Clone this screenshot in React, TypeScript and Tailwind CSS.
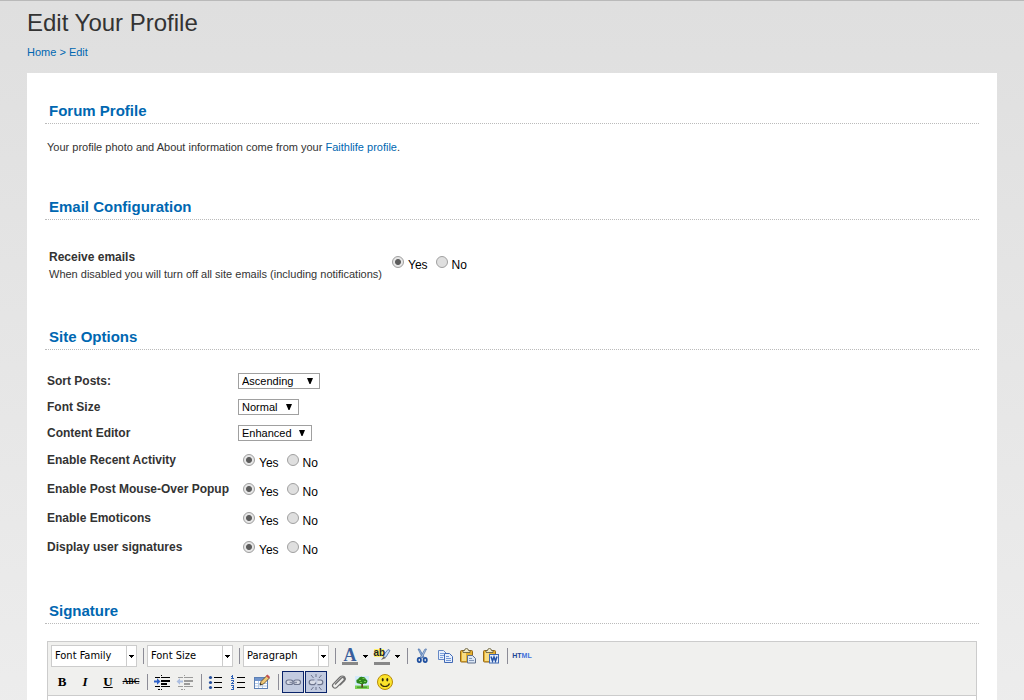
import type { ReactNode } from "react";

function SectionHeading({ children, className = "" }: { children: ReactNode; className?: string }) {
  return (
    <h2
      className={`border-b border-dotted border-[#bbbbbb] pb-0.5 pl-1 text-[15px] leading-5 font-bold text-[#0067b1] ${className}`}
    >
      {children}
    </h2>
  );
}

function Radio({ name, label, checked = false }: { name: string; label: string; checked?: boolean }) {
  return (
    <label className="flex items-center gap-1 text-xs text-black">
      <input
        type="radio"
        name={name}
        defaultChecked={checked}
        className="mb-1.5 size-3 appearance-none rounded-full border border-[#a0a0a0] bg-[#dfdfdf] checked:bg-[radial-gradient(circle,#5c5c5c_0,#5c5c5c_2.5px,#e6e6e6_3.5px)]"
      />
      {label}
    </label>
  );
}

function YesNo({ name }: { name: string }) {
  return (
    <div className="flex gap-2">
      <Radio name={name} label="Yes" checked />
      <Radio name={name} label="No" />
    </div>
  );
}

function SelectRow({ id, label, value, width }: { id: string; label: string; value: string; width: string }) {
  return (
    <div className="flex h-[26px] items-center">
      <label htmlFor={id} className="w-[191px] text-xs font-bold">
        {label}
      </label>
      <div className={`relative ${width}`}>
        <select
          id={id}
          className="block h-4 w-full appearance-none border border-[#a0a0a0] bg-white pl-[3px] text-[11px] leading-3 text-black"
        >
          <option>{value}</option>
        </select>
        <svg className="pointer-events-none absolute top-1 right-1.5 h-2 w-2" viewBox="0 0 8 8">
          <path d="M1 1h6L4.500 7h-1z" fill="#000" />
        </svg>
      </div>
    </div>
  );
}

function RadioRow({ name, label }: { name: string; label: string }) {
  return (
    <div className="flex h-[29px] items-center" role="radiogroup" aria-label={label}>
      <span className="w-[196px] pb-0.5 text-xs font-bold">{label}</span>
      <div className="pt-1">
        <YesNo name={name} />
      </div>
    </div>
  );
}

function Separator() {
  return <span className="mr-0.5 ml-1 h-4 w-px shrink-0 bg-[#8c8c96]" />;
}

function ToolSelect({ label }: { label: string }) {
  return (
    <div className="relative mr-px w-[86px] shrink-0">
      <select
        aria-label={label}
        className="block h-[22px] w-full appearance-none border border-[#cccccc] bg-white pl-[3px] font-['DejaVu_Sans_Condensed','DejaVu_Sans',sans-serif] text-[11px] text-black"
      >
        <option>{label}</option>
      </select>
      <span className="pointer-events-none absolute top-0 right-0 flex h-[22px] w-[11px] items-center justify-center border border-[#cccccc]">
        <svg className="h-[3px] w-[5px]" viewBox="0 0 5 3" shapeRendering="crispEdges">
          <path d="M0 0h5v1H0zM1 1h3v1H1zM2 2h1v1H2z" fill="#000" />
        </svg>
      </span>
    </div>
  );
}

function Tool({ label, active = false, children }: { label: string; active?: boolean; children: ReactNode }) {
  return (
    <button
      type="button"
      aria-label={label}
      className={`flex size-[22px] shrink-0 items-center justify-center border font-['Liberation_Serif',serif] text-black ${
        active ? "border-[#0a246a] bg-[#c2cbe0]" : "border-transparent"
      }`}
    >
      {children}
    </button>
  );
}

function SplitTool({ label, children }: { label: string; children: ReactNode }) {
  return (
    <button type="button" aria-label={label} className="flex h-[22px] w-[31px] shrink-0 items-center pl-px">
      {children}
      <svg className="ml-[3px] h-[3px] w-[5px]" viewBox="0 0 5 3" shapeRendering="crispEdges">
        <path d="M0 0h5v1H0zM1 1h3v1H1zM2 2h1v1H2z" fill="#000" />
      </svg>
    </button>
  );
}

function Icon({ children }: { children: ReactNode }) {
  return (
    <svg className="size-5 shrink-0" viewBox="0 0 20 20" fill="none">
      {children}
    </svg>
  );
}

function IndentArt({ reverse = false }: { reverse?: boolean }) {
  return (
    <g opacity={reverse ? 0.35 : 1}>
      <path
        shapeRendering="crispEdges"
        fill="#000"
        d="M9 3h1v1H9zM3 5h5v1H3zM9 5h9v1H9zM9 8h9v2H9zM9 11h6v2H9zM3 14h5v1H3zM9 14h9v1H9zM9 17h1v1H9zM6 17h2v1H6z"
      />
      {reverse ? (
        <path d="M1.500 9.500L5 6.300v2.200h3v2H5v2.200z" fill="#2f62c8" />
      ) : (
        <path d="M8.500 9.500L5 6.300v2.200H2v2h3v2.200z" fill="#2f62c8" />
      )}
    </g>
  );
}

function Clipboard() {
  return (
    <>
      <rect x="2.500" y="4.500" width="12" height="11.500" rx="1" fill="#e5b02f" stroke="#94691b" />
      <path d="M4 6h4v9H4z" fill="#f8dd84" />
      <path d="M5 6.500V4.500h1.500a2 2 0 014 0H12v2z" fill="#efe9c8" stroke="#5f5632" strokeWidth=".8" />
    </>
  );
}

function Editor() {
  return (
    <div className="mx-0.5 mt-[17px] flex flex-1 flex-col border border-b-0 border-[#cccccc]">
      <div className="flex flex-col gap-1 border-b border-[#cccccc] bg-[#f0f0ee] px-[3px] pt-[3px] pb-0.5">
        <div className="flex items-center gap-px">
          <ToolSelect label="Font Family" />
          <Separator />
          <ToolSelect label="Font Size" />
          <Separator />
          <ToolSelect label="Paragraph" />
          <Separator />
          <SplitTool label="Text color">
            <Icon>
              <text x="10" y="15" textAnchor="middle" fontFamily="Liberation Serif, serif" fontWeight="bold" fontSize="18" fill="#3a5f9c">
                A
              </text>
              <rect x="2" y="16" width="16" height="3" fill="#888888" />
            </Icon>
          </SplitTool>
          <SplitTool label="Background color">
            <Icon>
              <path d="M2 3h10v8H2z" fill="#fff26b" />
              <path d="M11.500 12l.5-3.500L16 3.500l2 1-4 6.500z" fill="#c6dbf5" stroke="#4b6b9b" strokeWidth=".8" />
              <path d="M9 14l2.500-3.500L14 12z" fill="#6f6a62" />
              <text x="1.500" y="10" fontFamily="Liberation Sans, sans-serif" fontWeight="bold" fontSize="10" fill="#222">
                ab
              </text>
              <rect x="2" y="16" width="16" height="3" fill="#888888" />
            </Icon>
          </SplitTool>
          <Separator />
          <Tool label="Cut">
            <Icon>
              <path d="M6 3l1.500 0 4.500 8-1.500 1z" fill="#8faed8" stroke="#476fa9" strokeWidth=".7" />
              <path d="M14.500 3L13 3l-4.500 8 1.500 1z" fill="#b7c9e3" stroke="#476fa9" strokeWidth=".7" />
              <ellipse cx="7.300" cy="14" rx="1.600" ry="2.100" stroke="#1f4f9f" strokeWidth="1.800" />
              <ellipse cx="13.200" cy="14" rx="1.600" ry="2.100" stroke="#1f4f9f" strokeWidth="1.800" />
            </Icon>
          </Tool>
          <Tool label="Copy">
            <Icon>
              <path d="M3.500 4.500h5l2.500 2.500v6.500H3.500z" fill="#e6effc" stroke="#6688c5" />
              <path d="M5 7.500h4M5 9.500h4M5 11.500h3" stroke="#7ca0dc" />
              <path d="M9.500 7.500h5l3 3v6H9.500z" fill="#e6effc" stroke="#4169b5" />
              <path d="M11 10.500h3M11 12.500h5M11 14.500h5" stroke="#7297d8" />
            </Icon>
          </Tool>
          <Tool label="Paste">
            <Icon>
              <Clipboard />
              <path d="M9.500 9.500h5l3 3v4.500h-8z" fill="#dce7f5" stroke="#5f6f8a" />
              <path d="M11 12.500h3M11 14.500h5" stroke="#8196b7" />
            </Icon>
          </Tool>
          <Tool label="Paste from Word">
            <Icon>
              <Clipboard />
              <rect x="8.500" y="8.500" width="9" height="8.500" fill="#e8f0fc" stroke="#3f69b1" />
              <path d="M10 10.500l1.500 4.500 1.500-4 1.500 4 1.500-4.500" stroke="#2453a6" strokeWidth="1.500" />
            </Icon>
          </Tool>
          <Separator />
          <button
            type="button"
            className="flex h-[22px] w-[22px] shrink-0 items-center justify-center text-[7px] font-bold text-[#1e4796]"
          >
            HT<span className="text-[#3f70dd]">ML</span>
          </button>
        </div>

        <div className="flex items-center gap-px">
          <Tool label="Bold">
            <span className="text-[13px] font-bold">B</span>
          </Tool>
          <Tool label="Italic">
            <span className="text-[13px] font-bold italic">I</span>
          </Tool>
          <Tool label="Underline">
            <span className="text-[13px] font-bold underline">U</span>
          </Tool>
          <Tool label="Strikethrough">
            <span className="text-[8px] font-bold line-through">ABC</span>
          </Tool>
          <Separator />
          <Tool label="Indent">
            <Icon>
              <IndentArt />
            </Icon>
          </Tool>
          <Tool label="Outdent">
            <Icon>
              <IndentArt reverse />
            </Icon>
          </Tool>
          <Separator />
          <Tool label="Bulleted list">
            <Icon>
              <g fill="#264f9c">
                <circle cx="4.500" cy="5.500" r="1.600" />
                <circle cx="4.500" cy="10.500" r="1.600" />
                <circle cx="4.500" cy="15.500" r="1.600" />
              </g>
              <path d="M8 5h8v1H8zM8 10h8v1H8zM8 15h8v1H8z" fill="#000" shapeRendering="crispEdges" />
            </Icon>
          </Tool>
          <Tool label="Numbered list">
            <Icon>
              <path
                d="M3 3h1v4H3zM2 4h1v1H2zM2 6h3v1H2zM2 8h3v1H2zM4 9h1v1H4zM3 10h1v1H3zM2 11h3v1H2zM2 13h3v1H2zM3 15h2v1H3zM4 14h1v3H4zM2 17h3v1H2z"
                fill="#2f62b8"
                shapeRendering="crispEdges"
              />
              <path d="M8 5h8v1H8zM8 10h8v1H8zM8 15h8v1H8z" fill="#000" shapeRendering="crispEdges" />
            </Icon>
          </Tool>
          <Tool label="Edit table">
            <Icon>
              <rect x="2.500" y="5.500" width="13" height="11" fill="#fff" stroke="#5d80b4" />
              <path d="M3 6h12v3H3z" fill="#6f94cc" />
              <path d="M3 11.500h12M3 14h12M6.500 9v7M10.500 9v7" stroke="#b4cbe8" />
              <path d="M8 13l1-3.500 6-6 2.500 2.500-6 6z" fill="#f0c774" stroke="#5e4d2e" strokeWidth=".9" />
              <path d="M14 4l1.500-1.500L18 5l-1.500 1.500z" fill="#c94e4e" />
              <path d="M8 13l.6-1.800 1.200 1.200z" fill="#222" />
            </Icon>
          </Tool>
          <Separator />
          <Tool label="Insert link" active>
            <Icon>
              <g stroke="#6d758e" strokeWidth="1.200">
                <rect x="3" y="8" width="7" height="4.500" rx="2.200" fill="#d9dde8" />
                <rect x="10.500" y="8" width="7" height="4.500" rx="2.200" fill="#d9dde8" />
                <path d="M6.500 10.500h7.500" stroke="#8b92a8" strokeWidth="1.500" />
              </g>
            </Icon>
          </Tool>
          <Tool label="Remove link" active>
            <Icon>
              <g stroke="#6d758e" strokeWidth="1.200">
                <path d="M8.500 8H5.500a2.300 2.300 0 000 4.600h3l1.500-2M11.500 8h3a2.300 2.300 0 010 4.600h-3" fill="#d9dde8" />
                <path d="M10 2v3M5 3l2.500 3M15.500 3L13 6M10 15v3M5 18l2.500-3M15.500 18L13 15" strokeWidth="1" />
              </g>
            </Icon>
          </Tool>
          <Tool label="Attach file">
            <Icon>
              <path
                d="M6 12.500l6.500-6.500a1.600 1.600 0 012.300 2.300l-7 7a2.400 2.400 0 01-3.500-3.500L11 5a3.100 3.100 0 014.600 0c1 1.200 1 2.500 0 3.700l-4.500 4.500"
                stroke="#6f6f6f"
                strokeWidth="1.200"
              />
            </Icon>
          </Tool>
          <Tool label="Insert image">
            <Icon>
              <path d="M3 4h14v13H3z" fill="#d3eafc" />
              <path d="M3 13.500h14V17H3z" fill="#7fcf55" />
              <path d="M5 14.500h10V16H5z" fill="#4aa52d" />
              <path d="M9.300 10h1.700v5.500H9.300z" fill="#5f4420" />
              <path d="M7 11.500c-1.800.3-3-1-2.500-2.200C4 8 5 7 6.200 7.200 6.500 5.500 8.500 4.500 10.300 5c2-.5 3.500.8 3.500 2.200 1.500.2 2.200 1.800 1.300 3-.2 1.300-1.500 1.800-2.500 1.200-1.500 1-4 1-5.600.1z" fill="#2c861b" />
              <path d="M7 8.500h2M10.500 6.500h2M12 9.500h2M8 10.500h2" stroke="#72c64b" />
            </Icon>
          </Tool>
          <Tool label="Insert emoticon">
            <Icon>
              <circle cx="10" cy="10" r="7.500" fill="#fbe32b" stroke="#b88a09" />
              <ellipse cx="7.700" cy="7.700" rx="1" ry="1.700" fill="#2c2410" />
              <ellipse cx="12.300" cy="7.700" rx="1" ry="1.700" fill="#2c2410" />
              <path d="M5.500 11.500c1.500 4 7.500 4 9 0" stroke="#3a2d0c" strokeWidth="1.200" />
            </Icon>
          </Tool>
        </div>
      </div>
      <textarea aria-label="Signature" className="block h-0 w-full flex-1 resize-none bg-white outline-none" />
    </div>
  );
}

export default function App() {
  return (
    <div className="flex min-h-screen flex-col border-t border-[#b9b9b9] bg-linear-to-b from-[#dfdfdf] to-[#ededed] px-[27px] font-['Liberation_Sans',Arial,sans-serif] text-[11px] text-[#333333]">
      <header className="pt-2">
        <h1 className="text-2xl leading-7">Edit Your Profile</h1>
        <nav aria-label="Breadcrumb" className="mt-[7px] leading-4 text-[#0067b1]">
          <a href="#home">Home</a> &gt; <a href="#edit">Edit</a>
        </nav>
      </header>

      <main className="mt-[13px] flex flex-1 flex-col bg-white px-[18px] pt-7">
        <SectionHeading>Forum Profile</SectionHeading>
        <p className="mt-[15px] pl-0.5 leading-4">
          Your profile photo and About information come from your{" "}
          <a href="#profile" className="text-[#0067b1]">
            Faithlife profile
          </a>
          .
        </p>

        <SectionHeading className="mt-[42px]">Email Configuration</SectionHeading>
        <div className="mt-7 flex items-center pl-1" role="radiogroup" aria-label="Receive emails">
          <div className="w-[343px]">
            <div className="text-xs leading-[18px] font-bold">Receive emails</div>
            <div className="leading-4">When disabled you will turn off all site emails (including notifications)</div>
          </div>
          <YesNo name="emails" />
        </div>

        <SectionHeading className="mt-[45px]">Site Options</SectionHeading>
        <div className="mt-[18px] pl-0.5">
          <SelectRow id="sort" label="Sort Posts:" value="Ascending" width="w-[82px]" />
          <SelectRow id="size" label="Font Size" value="Normal" width="w-[61px]" />
          <SelectRow id="editor" label="Content Editor" value="Enhanced" width="w-[74px]" />
          <RadioRow name="activity" label="Enable Recent Activity" />
          <RadioRow name="popup" label="Enable Post Mouse-Over Popup" />
          <RadioRow name="emoticons" label="Enable Emoticons" />
          <RadioRow name="signatures" label="Display user signatures" />
        </div>

        <SectionHeading className="mt-[39px]">Signature</SectionHeading>
        <Editor />
      </main>
    </div>
  );
}
